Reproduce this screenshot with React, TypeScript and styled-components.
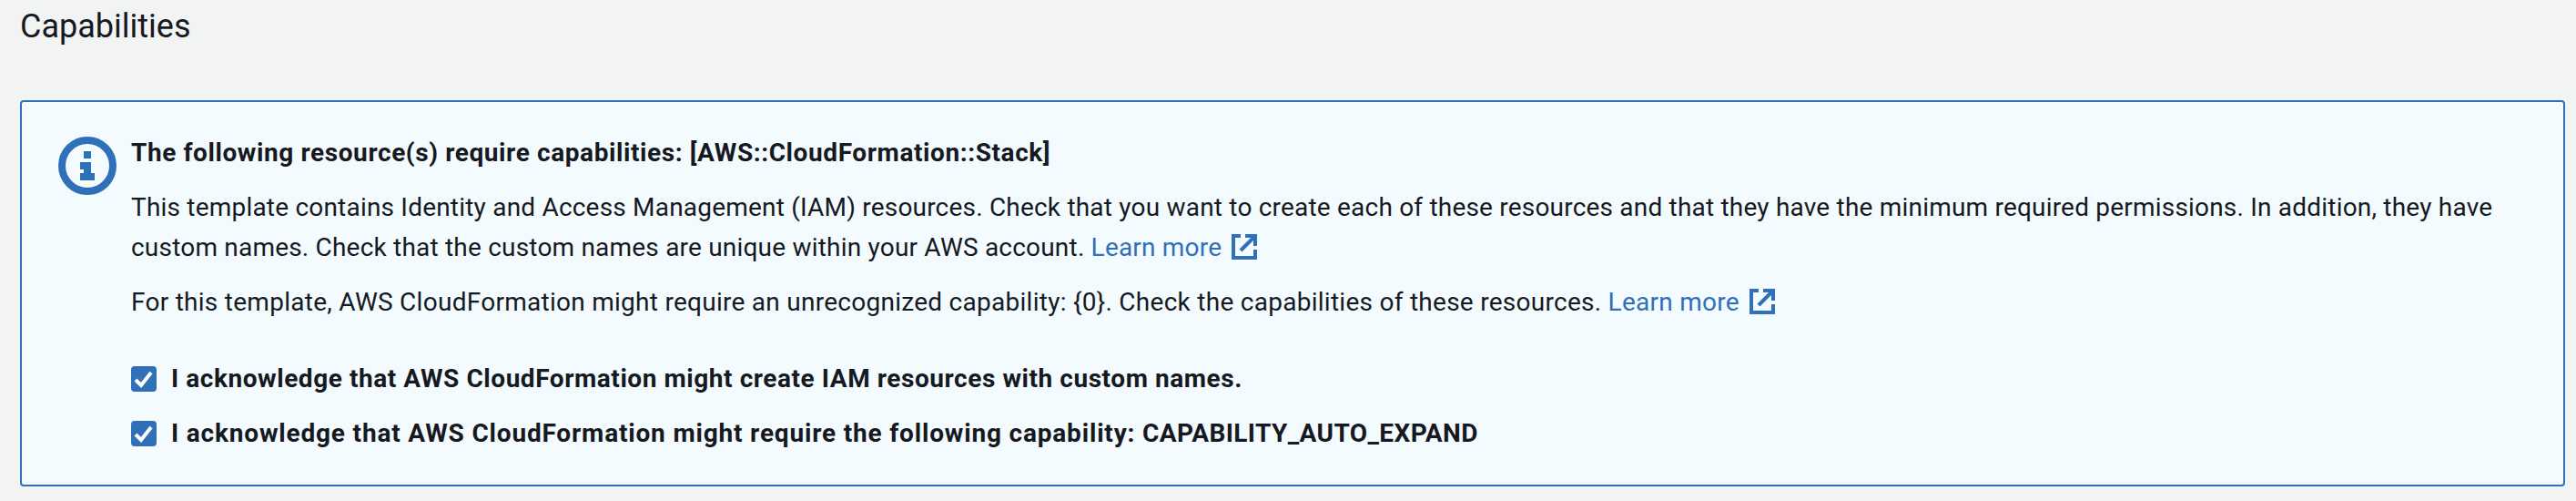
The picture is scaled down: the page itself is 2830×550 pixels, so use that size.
import { createGlobalStyle } from "styled-components";
import styled from "styled-components";

const GlobalStyle = createGlobalStyle`
    html, body {
        margin: 0;
        background-color: #f2f3f3;
    }
    body {
        font-family: Roboto, "Liberation Sans", sans-serif;
        color: #16191f;
    }
`

function InfoIcon() {
    return (
        <svg width="64" height="64" viewBox="0 0 64 64">
            <circle cx="32" cy="32" r="28" fill="none" stroke="#3070b8" strokeWidth="8" />
            <path fill="#3070b8" d="M28 16h8v8h-8zM24 28h12v12h4v8H24v-8h4v-4h-4z" />
        </svg>
    )
}

function ExternalIcon() {
    return (
        <svg width="28" height="28" viewBox="0 0 28 28">
            <path fill="none" stroke="#3070b8" strokeWidth="4" d="M10 2H2v24h24V17" />
            <path fill="none" stroke="#3070b8" strokeWidth="4" d="M15 2h11v11" />
            <path fill="none" stroke="#3070b8" strokeWidth="4" d="M25 3L10 18" />
        </svg>
    )
}

function CheckMark() {
    return (
        <svg width="28" height="28" viewBox="0 0 28 28">
            <path fill="none" stroke="#fff" strokeWidth="4" d="M5 15l6 6L22 7" />
        </svg>
    )
}

export default function App() {
    return (
        <>
            <GlobalStyle />
            <Page>
                <Heading>Capabilities</Heading>
                <Alert>
                    <IconColumn><InfoIcon /></IconColumn>
                    <Content>
                        <Title>The following resource(s) require capabilities: [AWS::CloudFormation::Stack]</Title>
                        <Paragraph $tracking={0.2}>
                            This template contains Identity and Access Management (IAM) resources. Check that you want to create each of these resources and that they have the minimum required permissions. In addition, they have custom names. Check that the custom names are unique within your AWS account. <LearnMore href="#">Learn more<ExternalIcon /></LearnMore>
                        </Paragraph>
                        <Paragraph $tracking={0.27}>
                            For this template, AWS CloudFormation might require an unrecognized capability: {"{0}"}. Check the capabilities of these resources. <LearnMore href="#">Learn more<ExternalIcon /></LearnMore>
                        </Paragraph>
                        <Checks>
                            <CheckRow>
                                <CheckBox><CheckMark /></CheckBox>
                                <CheckLabel $tracking={0.56}>I acknowledge that AWS CloudFormation might create IAM resources with custom names.</CheckLabel>
                            </CheckRow>
                            <CheckRow>
                                <CheckBox><CheckMark /></CheckBox>
                                <CheckLabel $tracking={0.82}>I acknowledge that AWS CloudFormation might require the following capability: <Capability>CAPABILITY_AUTO_EXPAND</Capability></CheckLabel>
                            </CheckRow>
                        </Checks>
                    </Content>
                </Alert>
            </Page>
        </>
    )
}

const Page = styled.div`
    padding: 0 12px 0 22px;
    height: 550px;
    box-sizing: border-box;
`

const Heading = styled.h2`
    margin: 0;
    padding-top: 7px;
    height: 110px;
    box-sizing: border-box;
    font-size: 36px;
    line-height: 44px;
    font-weight: 400;
`

const Alert = styled.div`
    display: flex;
    height: 424px;
    box-sizing: border-box;
    padding: 34px 40px 0 40px;
    background-color: #f3fbff;
    border: 2px solid #3070b8;
    border-radius: 4px;
`

const IconColumn = styled.div`
    flex: 0 0 80px;
    padding-top: 4px;
`

const Content = styled.div`
    flex: 1;
    font-size: 28px;
    line-height: 44px;
`

const Title = styled.div`
    font-weight: 700;
    letter-spacing: 0.59px;
    margin-bottom: 16px;
`

const Paragraph = styled.p<{ $tracking: number }>`
    margin: 0 0 16px;
    letter-spacing: ${(p) => p.$tracking}px;
`

const LearnMore = styled.a`
    color: #3070b8;
    text-decoration: none;
    white-space: nowrap;

    svg {
        vertical-align: -4px;
        margin-left: 11px;
    }
`

const Checks = styled.div`
    display: flex;
    flex-direction: column;
    gap: 16px;
    margin-top: 40px;
`

const CheckRow = styled.div`
    display: flex;
    align-items: center;
    gap: 16px;
    height: 44px;
`

const CheckBox = styled.span`
    display: flex;
    width: 28px;
    height: 28px;
    border-radius: 4px;
    background-color: #3070b8;
`

const CheckLabel = styled.span<{ $tracking: number }>`
    font-weight: 700;
    letter-spacing: ${(p) => p.$tracking}px;
`

const Capability = styled.span`
    letter-spacing: 0.4px;
`
